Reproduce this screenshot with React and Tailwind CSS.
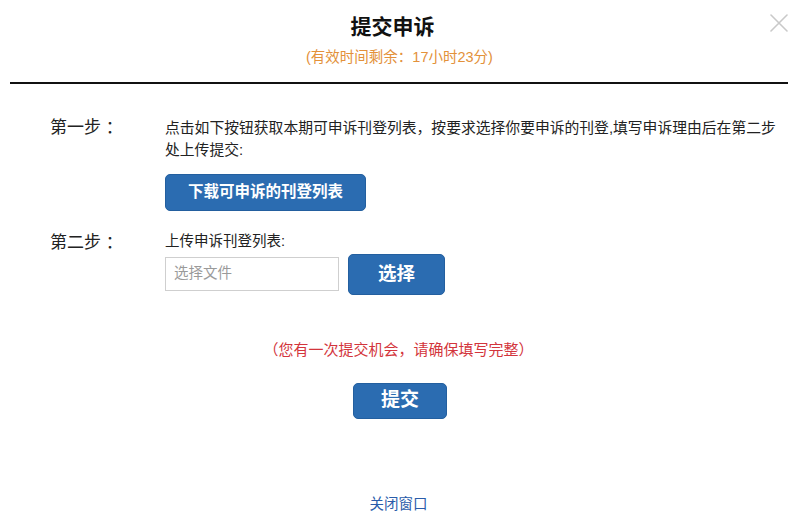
const CloseIcon = () => (
  <svg width="18" height="18" viewBox="0 0 18 18" fill="none">
    <path d="M1 1L17 17M17 1L1 17" stroke="#c9c9c9" strokeWidth="1.6" strokeLinecap="round" />
  </svg>
);

const BlueButton = ({ className = '', children }) => (
  <button
    type="button"
    className={`bg-[#2b6cb1] border border-[#235f9f] rounded-[5px] text-white font-bold flex items-center justify-center ${className}`}
  >
    {children}
  </button>
);

export default function App() {
  return (
    <div className="relative w-[803px] h-[530px] bg-white text-[#222] font-['Liberation_Sans','Noto_Sans_CJK_SC',sans-serif] overflow-hidden">
      <button type="button" className="absolute left-[770px] top-[14px]">
        <CloseIcon />
      </button>

      {/* header */}
      <div className="flex flex-col items-center pt-[13px]">
        <div className="text-[21px] leading-[28px] font-bold text-[#111] mr-[18px]">提交申诉</div>
        <div className="mt-[6px] text-[14.5px] leading-[20px] text-[#e3913a] mr-[4px]">(有效时间剩余：17小时23分)</div>
      </div>
      <div className="mt-[15px] ml-[10px] w-[778px] h-[1.5px] bg-[#111]" />

      {/* step 1 */}
      <div className="flex pl-[50px] mt-[33px]">
        <div className="w-[115px] shrink-0 text-[17px] leading-[22px]">第一步 ：</div>
        <div className="flex flex-col">
          <p className="w-[620px] text-[14.8px] leading-[22px]">
            点击如下按钮获取本期可申诉刊登列表，按要求选择你要申诉的刊登,填写申诉理由后在第二步处上传提交:
          </p>
          <BlueButton className="mt-[13px] w-[201px] h-[37px] text-[15.5px]">下载可申诉的刊登列表</BlueButton>
        </div>
      </div>

      {/* step 2 */}
      <div className="flex pl-[50px] mt-[19px]">
        <div className="w-[115px] shrink-0 text-[17px] leading-[22px] pt-[2px]">第二步 ：</div>
        <div className="flex flex-col">
          <div className="text-[14.5px] leading-[22px]">上传申诉刊登列表:</div>
          <div className="mt-[2px] flex items-center gap-[9px]">
            <div className="w-[174px] h-[34px] border border-[#cfcfcf] flex items-center pl-[8px] text-[14.5px] text-[#9a9a9a]">
              选择文件
            </div>
            <BlueButton className="w-[97px] h-[41px] text-[18.5px]">选择</BlueButton>
          </div>
        </div>
      </div>

      {/* notice + submit */}
      <div className="flex flex-col items-center">
        <div className="mt-[45px] text-[15px] leading-[20px] text-[#d3353c] pr-[6px]">（您有一次提交机会，请确保填写完整）</div>
        <BlueButton className="mt-[23px] w-[94px] h-[36px] text-[19px] mr-[3px]">提交</BlueButton>
        <a href="#" className="mt-[75px] text-[14.5px] leading-[20px] text-[#2a5caa] mr-[6px]">关闭窗口</a>
      </div>
    </div>
  );
}
